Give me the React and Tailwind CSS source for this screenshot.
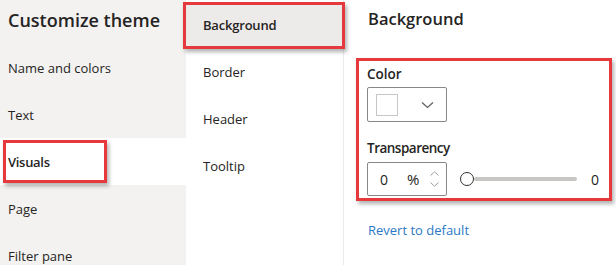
import React from "react";

const font = { fontFamily: '"Open Sans", "Noto Sans", sans-serif' };

function LeftItem({ label, active }) {
  return (
    <div className={`relative h-[47px] shrink-0 flex items-center pl-[8px] pt-[2px] text-[13px] ${active ? "bg-white font-semibold tracking-[-0.3px]" : ""}`}>
      <span>{label}</span>
      {active && (
        <div className="absolute left-[3px] top-[2px] w-[104px] h-[43px] border-[3px] border-[#e5393d] shadow-[2px_3px_4px_rgba(0,0,0,0.3)]" />
      )}
    </div>
  );
}

function MidItem({ label, active }) {
  return (
    <div className={`relative h-[47px] shrink-0 flex items-center pl-[17px] text-[13px] ${active ? "bg-[#edebe9] font-semibold tracking-[-0.2px]" : ""}`}>
      <span>{label}</span>
      {active && (
        <div className="absolute -left-[3px] top-0 w-[162px] h-[47px] border-[3px] border-[#e5393d] shadow-[2px_3px_4px_rgba(0,0,0,0.3)]" />
      )}
    </div>
  );
}

export default function App() {
  return (
    <div style={font} className="w-[616px] h-[265px] overflow-hidden flex bg-white text-[#252423]">
      <div className="w-[186px] shrink-0 bg-[#f3f2f1] flex flex-col">
        <div className="h-[44px] shrink-0 flex items-center pl-[8px] pb-[3px] text-[18px] font-semibold">Customize theme</div>
        <LeftItem label="Name and colors" />
        <LeftItem label="Text" />
        <LeftItem label="Visuals" active />
        <LeftItem label="Page" />
        <LeftItem label="Filter pane" />
      </div>
      <div className="w-[158px] shrink-0 border-r border-[#edebe9] pt-[2px] flex flex-col">
        <MidItem label="Background" active />
        <MidItem label="Border" />
        <MidItem label="Header" />
        <MidItem label="Tooltip" />
      </div>
      <div className="flex-1 flex flex-col">
        <div className="pl-[24px] pt-[8px] h-[58px] shrink-0 text-[16.5px] font-semibold leading-[22px]">Background</div>
        <div className="ml-[12px] w-[256px] shrink-0 border-[3px] border-[#e5393d] shadow-[2px_3px_4px_rgba(0,0,0,0.3)] pl-[8px] pt-[3px] pb-[2px]">
          <div className="text-[13.5px] font-semibold leading-[20px]">Color</div>
          <div className="mt-[3px] w-[80px] h-[35px] border border-[#8a8886] rounded-[2px] flex items-center pl-[8px] pr-[12px] justify-between">
            <div className="w-[22px] h-[22px] border border-[#c8c6c4] bg-white" />
            <svg width="13" height="8" viewBox="0 0 13 8" fill="none">
              <path d="M1 1.5 L6.5 6.5 L12 1.5" stroke="#605e5c" strokeWidth="1.2" />
            </svg>
          </div>
          <div className="mt-[16px] text-[13.5px] font-semibold leading-[20px] tracking-[-0.5px]">Transparency</div>
          <div className="mt-[4px] flex items-center">
            <div className="w-[80px] h-[34px] border border-[#8a8886] rounded-[2px] flex items-center pl-[12px] pr-[7px] text-[14px]">
              <span>0</span>
              <span className="ml-[19px] text-[15px]">%</span>
              <div className="ml-auto flex flex-col gap-[6px]">
                <svg width="9" height="5" viewBox="0 0 9 5" fill="none">
                  <path d="M0.5 4.5 L4.5 0.8 L8.5 4.5" stroke="#a19f9d" strokeWidth="1" />
                </svg>
                <svg width="9" height="5" viewBox="0 0 9 5" fill="none">
                  <path d="M0.5 0.5 L4.5 4.2 L8.5 0.5" stroke="#a19f9d" strokeWidth="1" />
                </svg>
              </div>
            </div>
            <div className="ml-[13px] flex items-center">
              <div className="w-[14px] h-[14px] rounded-full border-[1.5px] border-[#323130] bg-white" />
              <div className="w-[103px] h-[4px] bg-[#c8c6c4] rounded-full" />
            </div>
            <span className="ml-[14px] text-[14px]">0</span>
          </div>
        </div>
        <div className="pl-[24px] mt-[19px] text-[13px] leading-[20px] text-[#2b79c6]">Revert to default</div>
      </div>
    </div>
  );
}
